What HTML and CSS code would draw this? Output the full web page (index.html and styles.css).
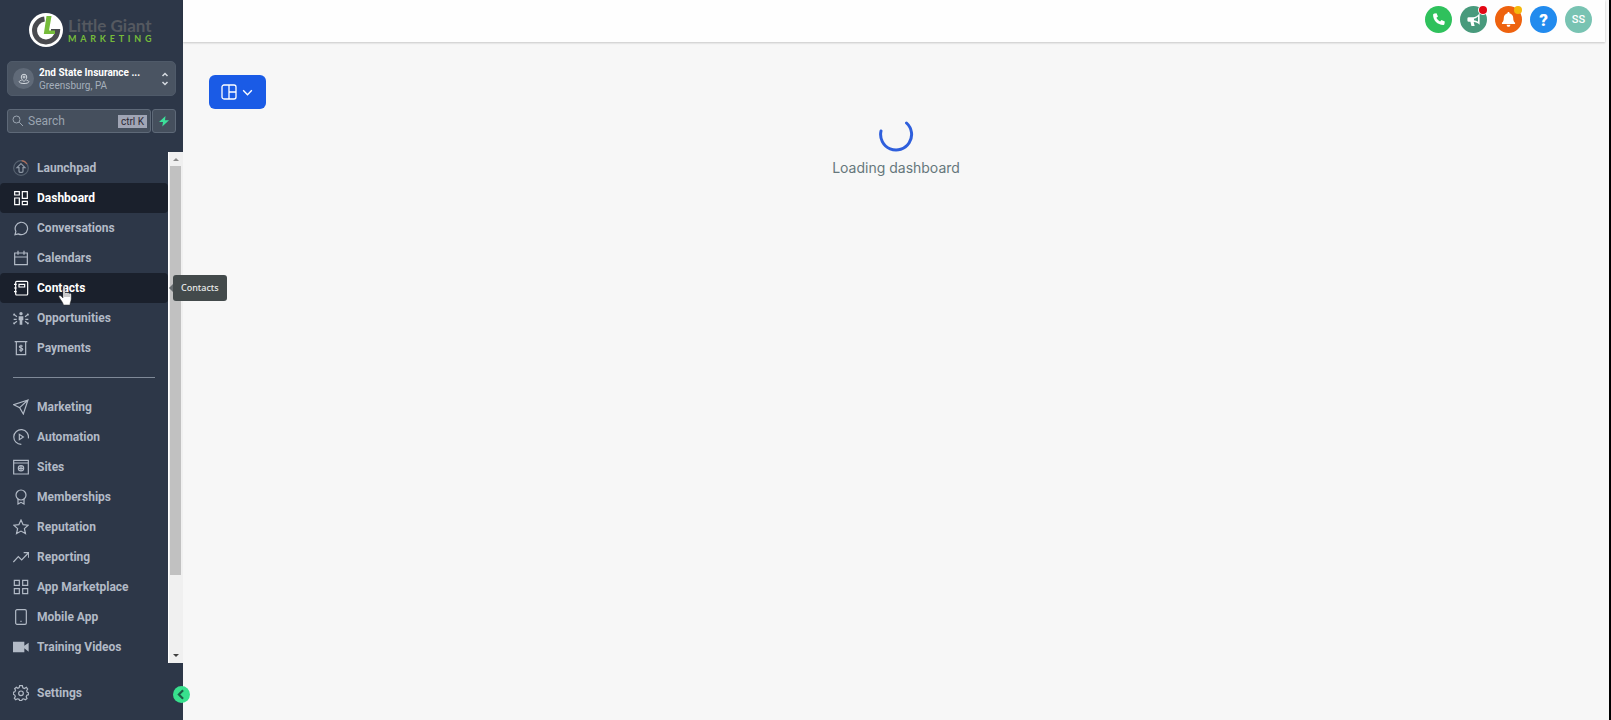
FILE: index.html
```html
<!DOCTYPE html>
<html lang="en">
<head>
    <meta charset="UTF-8">
    <meta name="viewport" content="width=device-width, initial-scale=1.0">
    <title>Dashboard</title>
    <link rel="stylesheet" href="styles.css">
</head>
<body>
    <aside class="sidebar">
        <a class="logo" href="#">
            <svg class="logo-mark" viewBox="0 0 34 34">
                <circle cx="17" cy="17" r="17" fill="#fff"/>
                <path d="M15.500 6A11.500 11.500 0 1 0 28.500 18.500H22" fill="none" stroke="#4a4b4f" stroke-width="5"/>
                <path d="M17.500 3h5l-2.500 14.500h6V21H14.800z" fill="#76bc3a"/>
            </svg>
            <span class="logo-text">
                <span class="logo-name">Little Giant</span>
                <span class="logo-sub"><span>M</span><span>A</span><span>R</span><span>K</span><span>E</span><span>T</span><span>I</span><span>N</span><span>G</span></span>
            </span>
        </a>

        <button class="account" type="button">
            <span class="account-icon">
                <svg class="icon-small" viewBox="0 0 24 24"><path d="M12 17c-3-3-5.500-5.500-5.500-9a5.500 5.500 0 0 1 11 0c0 3.500-2.500 6-5.500 9z"/><circle cx="12" cy="8" r="2"/><path d="M7 14.500c-3 .5-4.500 1.500-4.500 3 0 2 4 3.500 9.500 3.500s9.500-1.500 9.500-3.500c0-1.500-1.500-2.500-4.500-3"/></svg>
            </span>
            <span class="account-text">
                <span class="account-name">2nd State Insurance ...</span>
                <span class="account-place">Greensburg, PA</span>
            </span>
            <svg class="account-arrows" viewBox="0 0 8 14"><path d="M1.500 4L4 1.500 6.500 4M1.500 10L4 12.500 6.500 10"/></svg>
        </button>

        <div class="search-row">
            <label class="search">
                <svg class="icon-small" viewBox="0 0 24 24"><circle cx="9" cy="9" r="7"/><path d="M14.500 14.500L22 22"/></svg>
                <input type="text" placeholder="Search" aria-label="Search">
                <kbd>ctrl K</kbd>
            </label>
            <button class="quick" type="button" aria-label="Quick actions">
                <svg viewBox="0 0 12 12"><path d="M7.500 1L1 7h4l-.7 4.500L11 5.200H7z" fill="#3ce09a"/></svg>
            </button>
        </div>

        <div class="nav-wrap">
            <nav class="nav">
                <a href="#" class="nav-item">
                    <svg viewBox="0 0 24 24"><circle cx="12" cy="12" r="11" stroke="#56616f"/><path d="M13 1a11 11 0 0 1 8 5" stroke="#b0705c"/><path d="M12 5.500l6 6h-3V17a1.500 1.500 0 0 1-1.500 1.500h-3A1.500 1.500 0 0 1 9 17v-5.500H6z" stroke="#8f99a6"/></svg>
                    Launchpad
                </a>
                <a href="#" class="nav-item active">
                    <svg viewBox="0 0 24 24"><path d="M2.500 2.500h7v5h-7zM2.500 12h7v10h-7zM14 2.500h7.500v10H14zM14 17h7.500v5H14z"/></svg>
                    Dashboard
                </a>
                <a href="#" class="nav-item">
                    <svg viewBox="0 0 24 24"><path d="M3 22l1.300-5A9.300 9.300 0 1 1 8 20.800z"/></svg>
                    Conversations
                </a>
                <a href="#" class="nav-item">
                    <svg viewBox="0 0 24 24"><path d="M2.500 4.500h19V22h-19zM2.500 10.500h19M7.500 1v6M16.500 1v6"/></svg>
                    Calendars
                </a>
                <a href="#" class="nav-item active">
                    <svg viewBox="0 0 24 24"><rect x="4" y="2" width="18" height="20.500" rx="1.500"/><path d="M9 6.500h8.500v4H9zM1.500 6.500h4M1.500 12h4M1.500 17.500h4"/></svg>
                    Contacts
                    <span class="tooltip">Contacts</span>
                </a>
                <a href="#" class="nav-item">
                    <svg viewBox="0 0 24 24"><g class="solid"><circle cx="12" cy="5.500" r="2.500"/><path d="M8.500 9.500h7v6H14V22h-4v-6.500H8.500z"/><circle cx="1.800" cy="7" r="1.600"/><circle cx="22.200" cy="7" r="1.600"/><circle cx="1.800" cy="20" r="1.600"/><circle cx="22.200" cy="20" r="1.600"/></g><path d="M3 8l3 2M21 8l-3 2M1 14h4.500M23 14h-4.500M3 19l3-2M21 19l-3-2"/></svg>
                    Opportunities
                </a>
                <a href="#" class="nav-item">
                    <svg viewBox="0 0 24 24"><path d="M2.500 2.500h19M5 2.500V22h14V2.500"/><path d="M14.500 9.500c-1-1.300-5-1.300-5 .8 0 2.200 5.200 1.400 5.200 3.700 0 2.200-4.200 2.200-5.400.6M12 7v11"/></svg>
                    Payments
                </a>
                <hr>
                <a href="#" class="nav-item">
                    <svg viewBox="0 0 24 24"><path d="M22.500 1.500L1 8.500l9 4.500 5.500 9.500zM22.500 1.500L10 13"/></svg>
                    Marketing
                </a>
                <a href="#" class="nav-item">
                    <svg viewBox="0 0 24 24"><path d="M23 14A11 11 0 1 0 12.500 23"/><path d="M9.500 8v8l6-4z"/></svg>
                    Automation
                </a>
                <a href="#" class="nav-item">
                    <svg viewBox="0 0 24 24"><path d="M1 2h22v20.500H1zM1 6h22"/><circle cx="12" cy="14" r="4"/><path d="M8 14h8M12 10v8"/></svg>
                    Sites
                </a>
                <a href="#" class="nav-item">
                    <svg viewBox="0 0 24 24"><circle cx="12" cy="9" r="7.500"/><path d="M7.500 15v7.500l4.500-2.500 4.500 2.500V15"/></svg>
                    Memberships
                </a>
                <a href="#" class="nav-item">
                    <svg viewBox="0 0 24 24"><path d="M12 1.500l3.200 7 7.500.8-5.600 5.100 1.600 7.500-6.700-3.800-6.700 3.800 1.600-7.500L1.300 9.300l7.500-.8z"/></svg>
                    Reputation
                </a>
                <a href="#" class="nav-item">
                    <svg viewBox="0 0 24 24"><path d="M.5 19.500l7.500-8 5 5L23 6M16 5.500h7.500V13"/></svg>
                    Reporting
                </a>
                <a href="#" class="nav-item">
                    <svg viewBox="0 0 24 24"><path d="M2 2h7.500v7.500H2zM14.500 2H22v7.500h-7.500zM2 14.500h7.500V22H2zM14.500 14.500H22V22h-7.500z"/></svg>
                    App Marketplace
                </a>
                <a href="#" class="nav-item">
                    <svg viewBox="0 0 24 24"><rect x="4" y="1" width="16" height="22" rx="2"/><path d="M12 17.500v2"/></svg>
                    Mobile App
                </a>
                <a href="#" class="nav-item">
                    <svg viewBox="0 0 24 24"><path class="solid" d="M0 4h17v6l6.500-4.500v13.500L17 14v6H0z"/></svg>
                    Training Videos
                </a>
            </nav>
            <div class="scrollbar">
                <span class="arrow-up"></span>
                <span class="thumb"></span>
                <span class="arrow-down"></span>
            </div>
        </div>

        <div class="sidebar-footer">
            <a href="#" class="nav-item">
                <svg viewBox="0 0 24 24"><path d="M10 1h4l.8 3.200 2.400 1L20 3.500 22 6l-1.500 2.700.8 2.300 2.200 1v2.500l-2.700.8-1 2.200 1.200 2.700-2.500 2-2.500-1.500-2 .8-1 2h-3l-.8-2-2.200-.8L4 22l-2-2.200 1.500-2.500-.8-2.200L.5 14v-3l2.300-.8 1-2.200L2.500 5.500 5 3.500l2.300 1.400 2-.9z"/><circle cx="12" cy="12.500" r="3.500"/></svg>
                Settings
            </a>
            <button class="collapse" type="button" aria-label="Collapse menu">
                <svg viewBox="0 0 16 16"><path d="M9.500 4L5.500 8l4 4"/></svg>
            </button>
        </div>
    </aside>

    <div class="page">
        <header class="topbar">
            <button class="round phone" type="button" aria-label="Phone">
                <svg viewBox="0 0 16 16"><path d="M3.600 1.500l2.300-.3 1.500 3.600-1.600 1.400c.8 1.700 2.100 3 3.900 3.900l1.500-1.600 3.500 1.500-.3 2.500c-.1.800-.7 1.300-1.500 1.300C7 13.800 2.200 9 2.200 3c0-.8.600-1.400 1.400-1.500z" fill="#fff"/></svg>
            </button>
            <button class="round news" type="button" aria-label="News">
                <svg viewBox="0 0 16 16"><path d="M14.500 1v12.500c-2-1.800-4-2.700-6.300-2.900l1 4.400H5.800l-1.100-4.500H3A1.500 1.500 0 0 1 1.500 9V7A1.500 1.500 0 0 1 3 5.500h4.500c2.600 0 5-1.300 7-4.500z" fill="#fff"/><path d="M8.500 7.200v1.700c1.600.2 2.900.7 4.300 1.600V4.700c-1.300 1.300-2.700 2.200-4.300 2.500z" fill="#489a7c"/></svg>
                <span class="dot red"></span>
            </button>
            <button class="round bell" type="button" aria-label="Notifications">
                <svg viewBox="0 0 16 16"><path d="M8 0c.7 0 1.100.5 1.100 1.200C11.500 1.800 13 3.600 13 6.200c0 3 .8 4.300 2 5.300v1.200H1v-1.200c1.200-1 2-2.300 2-5.300 0-2.600 1.500-4.400 3.900-5C6.900.5 7.300 0 8 0zM6 13.500h4c0 1.300-.8 2.200-2 2.200s-2-.9-2-2.200z" fill="#fff"/></svg>
                <span class="dot yellow"></span>
            </button>
            <button class="round help" type="button">?</button>
            <button class="round user" type="button">SS</button>
        </header>

        <main class="content">
            <button class="layout-button" type="button" aria-label="Choose dashboard">
                <svg class="layout-icon" viewBox="0 0 16 16"><rect x="1" y="1" width="14" height="14" rx="2"/><path d="M8 1v14M8 8h7"/></svg>
                <svg class="chevron" viewBox="0 0 12 12"><path d="M2 4l4 4 4-4"/></svg>
            </button>
            <div class="loading">
                <svg class="spinner" viewBox="0 0 36 36"><path d="M28.500 7A15.500 15.500 0 1 1 3 15"/></svg>
                <p>Loading dashboard</p>
            </div>
        </main>
    </div>

    <svg class="pointer" viewBox="0 0 16 20"><path d="M5 1.500c0-1.300 2-1.300 2 0V7c.3-.9 1.800-.8 2 .2.400-.8 1.900-.6 2.100.5.500-.7 2.100-.3 2.100.9V13c0 2-1.200 3-1.200 6H5.500C5 16 2.500 14 1 11c-.6-1.200.8-2.200 2-1l2 2z" fill="#fff" stroke="#333" stroke-width=".5"/><path d="M7 7v4M9 7.500v3.500M11 8v3" stroke="#555" stroke-width=".6"/></svg>
</body>
</html>
```
FILE: styles.css
```css
* {
    margin: 0;
    padding: 0;
    box-sizing: border-box;
}

body {
    display: flex;
    height: 100vh;
    background-color: #f7f7f7;
    border-right: 2px solid #000;
    font-family: Roboto, "Liberation Sans", sans-serif;
    overflow: hidden;
}

button {
    border: none;
    font-family: inherit;
    cursor: pointer;
}

a {
    text-decoration: none;
}

/* Sidebar */
.sidebar {
    display: flex;
    flex-direction: column;
    flex: none;
    width: 183px;
    background-color: #2d3748;
}

.logo {
    display: flex;
    align-items: center;
    gap: 5px;
    padding: 13px 0 0 29px;
}

.logo-mark {
    width: 34px;
    height: 34px;
}

.logo-text {
    display: flex;
    flex-direction: column;
    font-family: Lato, sans-serif;
}

.logo-name {
    font-size: 17px;
    font-weight: bold;
    line-height: 17px;
    color: #555960;
}

.logo-sub {
    display: flex;
    justify-content: space-between;
    font-size: 9px;
    font-weight: bold;
    line-height: 10px;
    color: #76bc3a;
}

.account {
    display: flex;
    align-items: center;
    gap: 5px;
    height: 35px;
    margin: 14px 7px 0;
    padding: 0 6px 0 5px;
    border: 1px solid #4f5a69;
    border-radius: 5px;
    background-color: #4a5462;
    text-align: left;
}

.account-icon {
    display: flex;
    align-items: center;
    justify-content: center;
    flex: none;
    width: 21px;
    height: 21px;
    border-radius: 50%;
    background-color: #606a78;
}

.icon-small {
    flex: none;
    width: 12px;
    height: 12px;
    fill: none;
    stroke: #d5dae0;
    stroke-width: 2;
}

.account-text {
    display: flex;
    flex-direction: column;
    flex: 1;
    font-size: 10px;
    line-height: 13px;
    white-space: nowrap;
}

.account-name {
    font-weight: bold;
    color: #fff;
}

.account-place {
    color: #a5afbb;
}

.account-arrows {
    width: 8px;
    height: 14px;
    fill: none;
    stroke: #d5dae0;
    stroke-width: 1.5;
}

.search-row {
    display: flex;
    gap: 1px;
    height: 24px;
    margin: 13px 7px 19px;
}

.search {
    display: flex;
    align-items: center;
    flex: 1;
    gap: 4px;
    min-width: 0;
    padding: 0 3px 0 4px;
    border: 1px solid #5e6978;
    border-radius: 3px;
    background-color: #454f5d;
}

.search .icon-small {
    stroke: #9aa4b0;
}

.search input {
    flex: 1;
    min-width: 0;
    border: none;
    outline: none;
    background: none;
    font-family: inherit;
    font-size: 12px;
    color: #fff;
}

.search input::placeholder {
    color: #9aa4b0;
}

.search kbd {
    flex: none;
    padding: 0 3px;
    background-color: #a0a5b5;
    font-family: inherit;
    font-size: 10px;
    line-height: 13px;
    color: #2a2734;
}

.quick {
    display: flex;
    align-items: center;
    justify-content: center;
    flex: none;
    width: 24px;
    border: 1px solid #5e6978;
    border-radius: 3px;
    background-color: #454f5d;
}

.quick svg {
    width: 12px;
    height: 12px;
}

.nav-wrap {
    display: flex;
    flex: 1;
    min-height: 0;
}

.nav {
    flex: 1;
    padding-top: 1px;
}

.nav hr {
    height: 1px;
    margin: 14px 13px;
    border: none;
    background-color: #7f8998;
}

.nav-item {
    display: flex;
    align-items: center;
    gap: 8px;
    position: relative;
    height: 30px;
    padding-left: 13px;
    border-radius: 4px;
    font-size: 12px;
    font-weight: bold;
    line-height: 16px;
    color: #b2bac6;
}

.nav-item svg {
    width: 16px;
    height: 16px;
    fill: none;
    stroke: currentColor;
    stroke-width: 1.8;
}

.nav-item .solid {
    fill: currentColor;
    stroke: none;
}

.nav-item.active {
    background-color: #1a202c;
    color: #fff;
}

.tooltip {
    position: absolute;
    top: 2px;
    left: 173px;
    z-index: 2;
    padding: 5px 8px;
    border-radius: 3px;
    background-color: #434a4b;
    font-family: "Noto Sans", sans-serif;
    font-size: 9px;
    font-weight: 500;
    color: #e8eaea;
}

.tooltip::before {
    content: "";
    position: absolute;
    top: 9px;
    left: -4px;
    border: 4px solid transparent;
    border-left: none;
    border-right-color: #666c6f;
}

.scrollbar {
    display: flex;
    flex-direction: column;
    align-items: center;
    width: 15px;
    padding: 6px 1px 6px 0;
    border-left: 1px solid #fff;
    background-color: #f0f0f0;
}

.thumb {
    width: 11px;
    height: 82%;
    margin: 5px 0 auto;
    background-color: #c1c1c1;
}

.arrow-up,
.arrow-down {
    border: 3px solid transparent;
}

.arrow-up {
    border-top: none;
    border-bottom-color: #8b8b8b;
}

.arrow-down {
    border-bottom: none;
    border-top-color: #404040;
}

.sidebar-footer {
    display: flex;
    align-items: center;
    position: relative;
    height: 57px;
    padding-top: 2px;
}

.collapse {
    display: flex;
    position: absolute;
    top: 23px;
    right: -7px;
    z-index: 2;
    width: 17px;
    height: 17px;
    border-radius: 50%;
    background-color: #38e08d;
}

.collapse svg {
    width: 17px;
    height: 17px;
    fill: none;
    stroke: #1d5c46;
    stroke-width: 2;
}

/* Main area */
.page {
    display: flex;
    flex-direction: column;
    flex: 1;
}

.topbar {
    display: flex;
    justify-content: flex-end;
    gap: 8px;
    height: 42px;
    margin-right: 4px;
    padding: 6px 13px 0 0;
    background-color: #fefefe;
    box-shadow: 0 1px 2px rgba(0, 0, 0, 0.2);
}

.round {
    display: flex;
    align-items: center;
    justify-content: center;
    position: relative;
    width: 27px;
    height: 27px;
    border-radius: 50%;
    color: #fff;
}

.round svg {
    width: 15px;
    height: 15px;
}

.phone {
    background-color: #2fc15c;
}

.news {
    background-color: #489a7c;
}

.bell {
    background-color: #ee620e;
}

.help {
    background-color: #228bee;
    font-size: 17px;
    font-weight: 900;
}

.user {
    background-color: #78c3b2;
    font-size: 11px;
    font-weight: 500;
}

.dot {
    position: absolute;
    top: 0;
    right: 0;
    width: 8px;
    height: 8px;
    border-radius: 50%;
}

.red {
    background-color: #e30613;
    box-shadow: 0 0 0 1px #fff;
}

.yellow {
    background-color: #f5b80b;
}

.content {
    padding: 33px 26px;
}

.layout-button {
    display: flex;
    align-items: center;
    justify-content: center;
    gap: 4px;
    width: 57px;
    height: 34px;
    border-radius: 6px;
    background-color: #1a5be6;
}

.layout-button svg {
    fill: none;
    stroke: #fff;
    stroke-width: 1.3;
}

.layout-icon {
    width: 16px;
    height: 16px;
}

.chevron {
    width: 13px;
    height: 13px;
}

.loading {
    display: flex;
    flex-direction: column;
    align-items: center;
    gap: 6px;
    padding-top: 7px;
}

.spinner {
    width: 36px;
    height: 36px;
    fill: none;
    stroke: #2f5fdc;
    stroke-width: 3;
    stroke-linecap: round;
}

.loading p {
    font-family: Inter, sans-serif;
    font-size: 14px;
    line-height: 20px;
    color: #66777c;
}

.pointer {
    position: absolute;
    top: 286px;
    left: 58px;
    z-index: 3;
    width: 16px;
    height: 20px;
}
```
